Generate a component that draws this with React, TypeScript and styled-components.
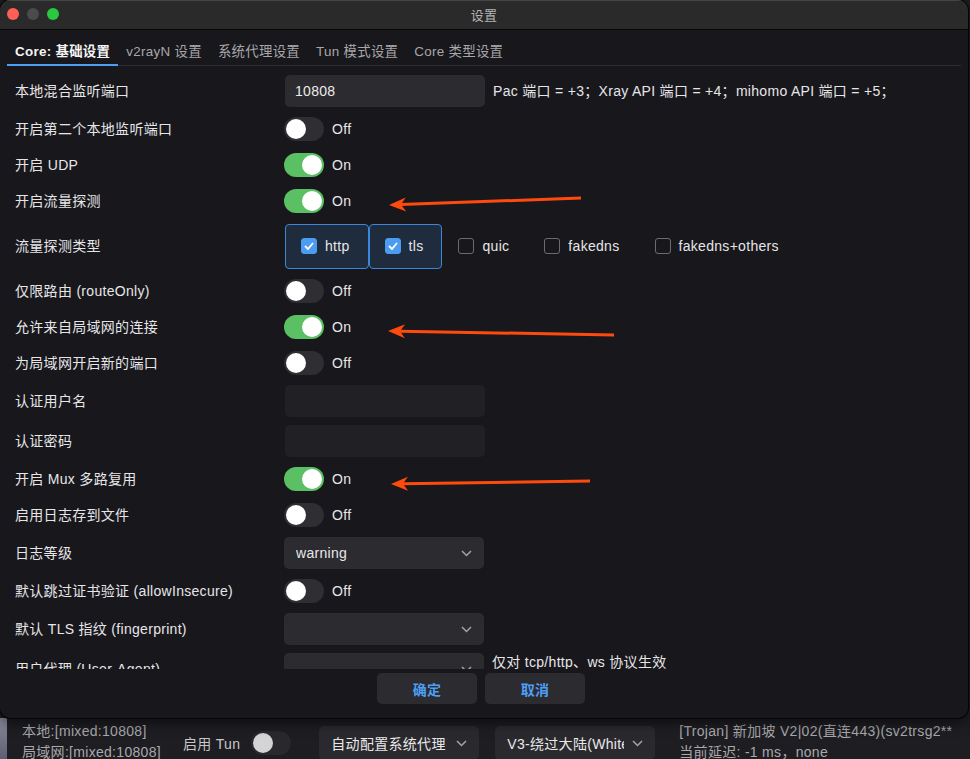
import styled, { createGlobalStyle } from 'styled-components';

const GlobalStyle = createGlobalStyle`
	html, body {
		margin: 0;
		padding: 0;
		background: #1e1d22;
	}
	body {
		font-family: 'Liberation Sans', 'Noto Sans CJK SC', sans-serif;
		letter-spacing: 0.3px;
		-webkit-font-smoothing: antialiased;
	}
	* {
		box-sizing: border-box;
	}
`;

const Page = styled.div`
	position: relative;
	width: 970px;
	height: 759px;
	overflow: hidden;
	background: #1e1d22;
	display: flex;
	flex-direction: column;
`;

const Dialog = styled.div`
	position: relative;
	z-index: 1;
	width: 968px;
	height: 718px;
	flex-shrink: 0;
	display: flex;
	flex-direction: column;
	background: #18171c;
	border-radius: 10px;
	overflow: hidden;
	box-shadow: 0 0 0 1px #050505, 0 4px 14px rgba(0, 0, 0, 0.6);
`;

const TitleBar = styled.div`
	height: 30px;
	flex-shrink: 0;
	display: grid;
	grid-template-columns: 1fr auto 1fr;
	align-items: center;
	padding-bottom: 1px;
	background: #2a2a2a;
	border-bottom: 1px solid #070707;
	box-shadow: inset 0 1px 0 #454545;
`;

const Lights = styled.div`
	display: flex;
	gap: 8px;
	padding-left: 7px;
`;

const Light = styled.span<{ $color: string }>`
	width: 12px;
	height: 12px;
	border-radius: 50%;
	background: ${(p) => p.$color};
`;

const Title = styled.div`
	font-size: 13px;
	color: #b4b4b4;
`;

const TabBar = styled.div`
	display: flex;
	margin: 0 7px;
	border-bottom: 1px solid #2c2b31;
	flex-shrink: 0;
`;

const Tab = styled.div<{ $active?: boolean }>`
	padding: 14px 8px 4px;
	line-height: 16px;
	font-size: 13.4px;
	white-space: nowrap;
	color: ${(p) => (p.$active ? '#f4f4f4' : '#a7a7aa')};
	font-weight: ${(p) => (p.$active ? 600 : 400)};
	border-bottom: 2px solid ${(p) => (p.$active ? '#4d9ff3' : 'transparent')};
	margin-bottom: -1px;
`;

const Body = styled.div`
	height: 603px;
	flex-shrink: 0;
	overflow: hidden;
	padding: 5px 0 0 15px;
`;

const Row = styled.div<{ $h: number }>`
	display: flex;
	align-items: center;
	height: ${(p) => p.$h}px;
`;

const Label = styled.div`
	width: 270px;
	flex-shrink: 0;
	font-size: 14px;
	line-height: 20px;
	color: #e6e6e8;
	white-space: nowrap;
`;

const TextInput = styled.input<{ $dim?: boolean }>`
	width: 200px;
	height: 32px;
	border: none;
	outline: none;
	border-radius: 5px;
	padding: 0 10px;
	font-family: inherit;
	font-size: 14px;
	letter-spacing: 0.3px;
	color: #ececec;
	background: ${(p) => (p.$dim ? '#212025' : '#2c2b30')};
`;

const SelectBox = styled.div<{ $w?: number; $h?: number; $bg?: string }>`
	width: ${(p) => p.$w ?? 200}px;
	height: ${(p) => p.$h ?? 32}px;
	flex-shrink: 0;
	margin-left: -1px;
	display: flex;
	align-items: center;
	justify-content: space-between;
	gap: 8px;
	padding: 0 12px;
	border-radius: 5px;
	background: ${(p) => p.$bg ?? '#2c2b30'};
	font-size: 14px;
	color: #e8e8e8;
	overflow: hidden;
`;

const SelectText = styled.span`
	white-space: nowrap;
	overflow: hidden;
`;

const Hint = styled.div<{ $top?: boolean }>`
	margin-left: 8px;
	font-size: 14px;
	line-height: 20px;
	color: #e6e6e8;
	white-space: nowrap;
	align-self: ${(p) => (p.$top ? 'flex-start' : 'center')};
	padding-top: ${(p) => (p.$top ? '3px' : '0')};
`;

const Track = styled.span<{ $on: boolean; $dark?: boolean }>`
	width: 40px;
	height: 24px;
	flex-shrink: 0;
	display: flex;
	align-items: center;
	justify-content: ${(p) => (p.$on ? 'flex-end' : 'flex-start')};
	padding: 0 2px;
	margin-left: -1px;
	border-radius: 12px;
	background: ${(p) => (p.$on ? '#5bbf63' : p.$dark ? '#29282d' : '#2f2e33')};
`;

const Knob = styled.span<{ $dark?: boolean }>`
	width: 20px;
	height: 20px;
	border-radius: 50%;
	background: ${(p) => (p.$dark ? '#d4d4d6' : '#ffffff')};
`;

const ToggleText = styled.span`
	margin-left: 8px;
	font-size: 14px;
	color: #e6e6e8;
`;

const CheckGroup = styled.div`
	display: flex;
	align-items: center;
`;

const CheckItem = styled.div<{ $checked: boolean }>`
	display: flex;
	align-items: center;
	gap: 8px;
	height: 45px;
	padding: 0 18px 0 15px;
	border: 1px solid ${(p) => (p.$checked ? '#3b87dc' : 'transparent')};
	background: ${(p) => (p.$checked ? '#1f2c3e' : 'transparent')};
	border-radius: 4px;
	font-size: 14px;
	color: #e6e6e8;
`;

const Box = styled.span<{ $checked: boolean }>`
	width: 16px;
	height: 16px;
	border-radius: 3px;
	display: flex;
	align-items: center;
	justify-content: center;
	background: ${(p) => (p.$checked ? '#4c9cf1' : 'transparent')};
	border: 1px solid ${(p) => (p.$checked ? '#4c9cf1' : '#6b6b70')};
`;

const Footer = styled.div`
	flex: 1;
	display: flex;
	justify-content: center;
	align-items: flex-start;
	gap: 8px;
	padding: 4px 6px 0 0;
`;

const DialogButton = styled.button`
	width: 100px;
	height: 31px;
	border: none;
	border-radius: 5px;
	background: #2c2b30;
	color: #4d9ff3;
	font-family: inherit;
	font-size: 14px;
	font-weight: 700;
	letter-spacing: 0.3px;
`;

const StatusBar = styled.div`
	height: 50px;
	flex-shrink: 0;
	display: flex;
	align-items: center;
`;

const Edge = styled.div`
	width: 7px;
	align-self: stretch;
	background: linear-gradient(180deg, #8a8a9c 0%, #55556a 100%);
`;

const StatusLines = styled.div<{ $w: number; $ml: number }>`
	width: ${(p) => p.$w}px;
	margin-left: ${(p) => p.$ml}px;
	align-self: flex-start;
	padding-top: 3px;
	font-size: 14px;
	line-height: 21px;
	color: #a9a9ac;
	white-space: nowrap;
	overflow: hidden;
	flex-shrink: 0;
`;

const TunLabel = styled.span`
	font-size: 14px;
	color: #c8c8ca;
	margin-right: 12px;
	white-space: nowrap;
`;

const StatusSelect = styled.div<{ $ml: number }>`
	margin-left: ${(p) => p.$ml}px;
	padding-top: 8px;
	align-self: flex-start;
`;

const Overlay = styled.svg`
	position: absolute;
	top: 0;
	left: 0;
	z-index: 5;
	pointer-events: none;
`;

const Chevron = () => (
	<svg width='11' height='7' viewBox='0 0 11 7' style={{ flexShrink: 0 }}>
		<polyline points='1,1 5.5,5.5 10,1' fill='none' stroke='#a3a3a6' strokeWidth='1.5' />
	</svg>
);

const Toggle = ({ on, dark }: { on: boolean; dark?: boolean }) => (
	<Track $on={on} $dark={dark}>
		<Knob $dark={dark} />
	</Track>
);

type RowDef =
	| { kind: 'input'; label: string; value?: string; hint?: string; dim?: boolean }
	| { kind: 'toggle'; label: string; on: boolean }
	| { kind: 'checks'; label: string }
	| { kind: 'select'; label: string; value?: string; hint?: string };

const rows: RowDef[] = [
	{ kind: 'input', label: '本地混合监听端口', value: '10808', hint: 'Pac 端口 = +3；Xray API 端口 = +4；mihomo API 端口 = +5；' },
	{ kind: 'toggle', label: '开启第二个本地监听端口', on: false },
	{ kind: 'toggle', label: '开启 UDP', on: true },
	{ kind: 'toggle', label: '开启流量探测', on: true },
	{ kind: 'checks', label: '流量探测类型' },
	{ kind: 'toggle', label: '仅限路由 (routeOnly)', on: false },
	{ kind: 'toggle', label: '允许来自局域网的连接', on: true },
	{ kind: 'toggle', label: '为局域网开启新的端口', on: false },
	{ kind: 'input', label: '认证用户名', dim: true },
	{ kind: 'input', label: '认证密码', dim: true },
	{ kind: 'toggle', label: '开启 Mux 多路复用', on: true },
	{ kind: 'toggle', label: '启用日志存到文件', on: false },
	{ kind: 'select', label: '日志等级', value: 'warning' },
	{ kind: 'toggle', label: '默认跳过证书验证 (allowInsecure)', on: false },
	{ kind: 'select', label: '默认 TLS 指纹 (fingerprint)' },
	{ kind: 'select', label: '用户代理 (User-Agent)', hint: '仅对 tcp/http、ws 协议生效' },
];

const sniffing = [
	{ name: 'http', checked: true },
	{ name: 'tls', checked: true },
	{ name: 'quic', checked: false },
	{ name: 'fakedns', checked: false },
	{ name: 'fakedns+others', checked: false },
];

const tabs = ['Core: 基础设置', 'v2rayN 设置', '系统代理设置', 'Tun 模式设置', 'Core 类型设置'];

// markup arrows drawn on top of the screenshot: [tailX, tailY, tipX, tipY]
const arrows = [
	[581, 198, 389, 205],
	[614, 335, 388, 331],
	[590, 481, 391, 484],
];

const arrowHead = (x1: number, y1: number, x2: number, y2: number) => {
	const len = Math.hypot(x2 - x1, y2 - y1);
	const ux = (x2 - x1) / len;
	const uy = (y2 - y1) / len;
	const px = -uy;
	const py = ux;
	const pts = [
		[x2, y2],
		[x2 - ux * 17 + px * 7, y2 - uy * 17 + py * 7],
		[x2 - ux * 12, y2 - uy * 12],
		[x2 - ux * 17 - px * 7, y2 - uy * 17 - py * 7],
	];
	return { points: pts.map((p) => p.join(',')).join(' '), nx: x2 - ux * 12, ny: y2 - uy * 12 };
};

const renderControl = (r: RowDef) => {
	switch (r.kind) {
		case 'input':
			return (
				<>
					<TextInput readOnly value={r.value ?? ''} $dim={r.dim} />
					{r.hint && <Hint>{r.hint}</Hint>}
				</>
			);
		case 'toggle':
			return (
				<>
					<Toggle on={r.on} />
					<ToggleText>{r.on ? 'On' : 'Off'}</ToggleText>
				</>
			);
		case 'checks':
			return (
				<CheckGroup>
					{sniffing.map((s) => (
						<CheckItem key={s.name} $checked={s.checked}>
							<Box $checked={s.checked}>
								{s.checked && (
									<svg width='10' height='8' viewBox='0 0 10 8'>
										<polyline points='1,4 4,7 9,1' fill='none' stroke='#fff' strokeWidth='1.8' />
									</svg>
								)}
							</Box>
							{s.name}
						</CheckItem>
					))}
				</CheckGroup>
			);
		case 'select':
			return (
				<>
					<SelectBox>
						<SelectText>{r.value ?? ''}</SelectText>
						<Chevron />
					</SelectBox>
					{r.hint && <Hint $top>{r.hint}</Hint>}
				</>
			);
	}
};

const rowHeight = (r: RowDef) => (r.kind === 'toggle' ? 36 : r.kind === 'checks' ? 54 : 40);

const App = () => {
	return (
		<>
			<GlobalStyle />
			<Page>
				<Dialog>
					<TitleBar>
						<Lights>
							<Light $color='#ff5f57' />
							<Light $color='#4b4b4d' />
							<Light $color='#28c840' />
						</Lights>
						<Title>设置</Title>
						<div />
					</TitleBar>
					<TabBar>
						{tabs.map((t, i) => (
							<Tab key={t} $active={i === 0}>
								{t}
							</Tab>
						))}
					</TabBar>
					<Body>
						{rows.map((r) => (
							<Row key={r.label} $h={rowHeight(r)}>
								<Label>{r.label}</Label>
								{renderControl(r)}
							</Row>
						))}
					</Body>
					<Footer>
						<DialogButton>确定</DialogButton>
						<DialogButton>取消</DialogButton>
					</Footer>
				</Dialog>
				<StatusBar>
					<Edge />
					<StatusLines $w={161} $ml={15}>
						<div>本地:[mixed:10808]</div>
						<div>局域网:[mixed:10808]</div>
					</StatusLines>
					<TunLabel>启用 Tun</TunLabel>
					<Toggle on={false} dark />
					<StatusSelect $ml={29}>
						<SelectBox $w={160} $h={34} $bg='#2a292e'>
							<SelectText>自动配置系统代理</SelectText>
							<Chevron />
						</SelectBox>
					</StatusSelect>
					<StatusSelect $ml={17}>
						<SelectBox $w={160} $h={34} $bg='#2a292e'>
							<SelectText>V3-绕过大陆(Whitelist)</SelectText>
							<Chevron />
						</SelectBox>
					</StatusSelect>
					<StatusLines $w={273} $ml={24}>
						<div>[Trojan] 新加坡 V2|02(直连443)(sv2trsg2**)</div>
						<div>当前延迟: -1 ms，none</div>
					</StatusLines>
				</StatusBar>
				<Overlay width='970' height='759' viewBox='0 0 970 759'>
					{arrows.map(([x1, y1, x2, y2], i) => {
						const head = arrowHead(x1, y1, x2, y2);
						return (
							<g key={i}>
								<line x1={x1} y1={y1} x2={head.nx} y2={head.ny} stroke='#ff4a0d' strokeWidth='3' />
								<polygon points={head.points} fill='#ff4a0d' />
							</g>
						);
					})}
				</Overlay>
			</Page>
		</>
	);
};

export default App;
